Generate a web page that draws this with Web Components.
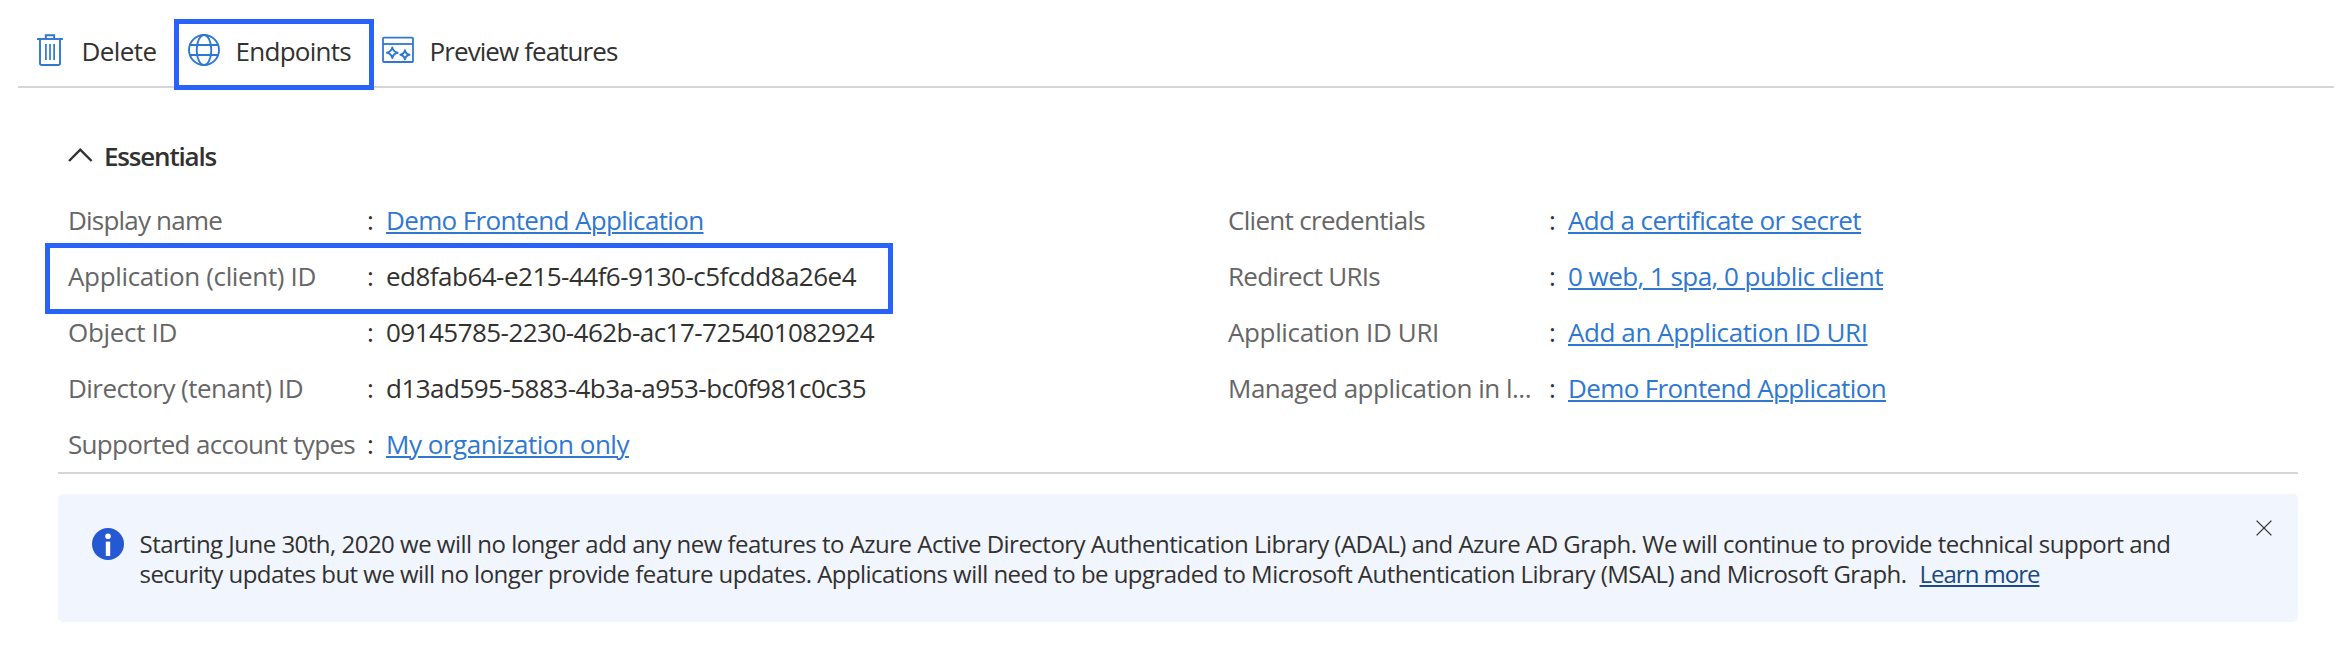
<!DOCTYPE html>
<html lang="en">
<head>
<meta charset="utf-8">
<title>App registration</title>
<style>
  html, body { margin: 0; background: #fff; }
  body { font-family: "Open Sans", "Noto Sans", sans-serif; font-size: 26px; color: #323130; overflow: hidden; height: 656px; }
</style>
</head>
<body>
<app-overview></app-overview>
<script>
const define = (name, html, after) => {
  const t = document.createElement('template');
  t.innerHTML = html;
  customElements.define(name, class extends HTMLElement {
    connectedCallback() {
      if (this.shadowRoot) return;
      this.attachShadow({ mode: 'open' }).append(t.content.cloneNode(true));
      if (after) after(this, this.shadowRoot);
    }
  });
};

/* One line of text, tracked so that its advance equals the "w" attribute. */
define('text-run', `
<style>
  :host { display: inline-block; white-space: nowrap; }
  :host([link]) span { color: #2f78d2; text-decoration: underline; text-decoration-thickness: 2px; text-underline-offset: 2px; }
  :host([link="dark"]) span { color: #1b4a84; }
</style><span><slot></slot></span>`, (el, root) => {
  const w = parseFloat(el.getAttribute('w'));
  const s = root.querySelector('span');
  if (w) s.style.letterSpacing = ((w - s.getBoundingClientRect().width) / [...el.textContent].length).toFixed(4) + 'px';
});

define('focus-frame', `
<style>
  :host { position: absolute; box-sizing: border-box; border: 5px solid #2962f9; pointer-events: none; }
</style>`);

const icons = {
  trash: `<g fill="none" stroke="#2f78d2" stroke-width="1.9">
    <path d="M3 5H29"/><path d="M11.8 5V1.2H20.2V5"/>
    <path d="M6 5V29.3Q6 31 7.7 31H24.3Q26 31 26 29.3V5"/>
    <path d="M11.9 10V26M16 10V26M20.1 10V26" stroke-width="1.7"/></g>`,
  globe: `<g fill="none" stroke="#2f78d2" stroke-width="1.9">
    <circle cx="16" cy="16" r="15"/><ellipse cx="16" cy="16" rx="7.3" ry="15"/>
    <path d="M2 11H30M2 21H30"/></g>`,
  preview: `<g fill="none" stroke="#2f78d2" stroke-width="1.8">
    <rect x="1" y="3.6" width="30" height="24.4" rx="1"/><path d="M1 10H31"/>
    <path stroke-width="1.9" stroke-linejoin="round" d="M10.3 13.4Q11.3 17.8 15.7 18.7Q11.3 19.6 10.3 24Q9.3 19.6 4.9 18.7Q9.3 17.8 10.3 13.4Z"/>
    <path stroke-width="1.9" stroke-linejoin="round" d="M22.9 16.2Q23.7 20 27.5 20.8Q23.7 21.6 22.9 25.4Q22.1 21.6 18.3 20.8Q22.1 20 22.9 16.2Z"/></g>`,
  info: `<circle cx="16" cy="16" r="16" fill="#2459d3"/><circle cx="16" cy="8.2" r="2.8" fill="#fff"/><rect x="13.8" y="13.6" width="4.4" height="14.4" fill="#fff"/>`,
  chevron: `<path d="M1 15 12.3 3.6 23.6 15" fill="none" stroke="#323130" stroke-width="2.4"/>`,
  close: `<path d="M.6.6 15.4 15.4M15.4.6.6 15.4" fill="none" stroke="#323130" stroke-width="1.3"/>`
};
const boxes = { chevron: [25, 18], close: [16, 16] };
define('ui-icon', `<style>:host { display: block; flex: none; } svg { display: block; }</style>`, (el, root) => {
  const [w, h] = boxes[el.getAttribute('name')] || [32, 32];
  root.innerHTML += `<svg width="${w}" height="${h}" viewBox="0 0 ${w} ${h}">${icons[el.getAttribute('name')]}</svg>`;
});

customElements.define('command-item', class extends HTMLElement {
  connectedCallback() {
    this.attachShadow({ mode: 'open' }).innerHTML = `
<style>
  :host { display: flex; gap: 15.5px; position: relative; height: 52px; }
  ui-icon { margin-top: 10px; }
  text-run { line-height: 54px; }
  focus-frame { left: -14px; right: -23px; top: -5px; height: 71px; }
</style>
<ui-icon name="${this.getAttribute('icon')}"></ui-icon><text-run w="${this.getAttribute('w')}">${this.getAttribute('label')}</text-run>
${this.hasAttribute('framed') ? '<focus-frame></focus-frame>' : ''}`;
  }
});

customElements.define('essentials-row', class extends HTMLElement {
  connectedCallback() {
    const a = n => this.getAttribute(n);
    this.attachShadow({ mode: 'open' }).innerHTML = `
<style>
  :host { display: grid; grid-template-columns: 299px 19px 1fr; height: 56px; line-height: 56px; position: relative; }
  .label { color: #666; }
  :host([side="right"]) { grid-template-columns: 321px 19px 1fr; }
  focus-frame { left: -23px; width: 848px; top: -5px; height: 71px; }
</style>
<span class="label"><text-run w="${a('lw')}">${a('label')}</text-run></span><span>:</span>
<text-run w="${a('vw')}" ${this.hasAttribute('link') ? 'link' : ''}>${a('value')}</text-run>
${this.hasAttribute('framed') ? '<focus-frame></focus-frame>' : ''}`;
  }
});

define('essentials-panel', `
<style>
  :host { display: block; margin: 0 36px 0 58px; border-bottom: 2px solid #d6d6d6; height: 386px; box-sizing: border-box; }
  header { display: flex; padding: 40px 0 0 10px; height: 104px; box-sizing: border-box; line-height: 56px; font-weight: 600; }
  header ui-icon { margin: 18px 11px 0 0; }
  .cols { display: grid; grid-template-columns: 1160px 1fr; padding-left: 10px; }
</style>
<header><ui-icon name="chevron"></ui-icon><text-run w="112">Essentials</text-run></header>
<div class="cols">
  <div>
    <essentials-row label="Display name" lw="154" value="Demo Frontend Application" vw="317.5" link></essentials-row>
    <essentials-row label="Application (client) ID" lw="248" value="ed8fab64-e215-44f6-9130-c5fcdd8a26e4" vw="470" framed></essentials-row>
    <essentials-row label="Object ID" lw="109" value="09145785-2230-462b-ac17-725401082924" vw="488"></essentials-row>
    <essentials-row label="Directory (tenant) ID" lw="235" value="d13ad595-5883-4b3a-a953-bc0f981c0c35" vw="480"></essentials-row>
    <essentials-row label="Supported account types" lw="287" value="My organization only" vw="243" link></essentials-row>
  </div>
  <div>
    <essentials-row side="right" label="Client credentials" lw="197" value="Add a certificate or secret" vw="293" link></essentials-row>
    <essentials-row side="right" label="Redirect URIs" lw="152" value="0 web, 1 spa, 0 public client" vw="315" link></essentials-row>
    <essentials-row side="right" label="Application ID URI" lw="211" value="Add an Application ID URI" vw="299.5" link></essentials-row>
    <essentials-row side="right" label="Managed application in l..." lw="303" value="Demo Frontend Application" vw="318" link></essentials-row>
  </div>
</div>`);

define('notice-banner', `
<style>
  :host { display: flex; margin: 20px 36px 0 58px; height: 128px; background: #f0f5fe; border-radius: 5px; font-size: 24px; line-height: 30px; box-sizing: border-box; padding: 34px 26px 0 34px; }
  .text { flex: 1; padding-left: 15.5px; margin-top: 1px; }
  .text div { height: 30px; white-space: nowrap; display: flex; gap: 13px; }
  ui-icon[name=close] { margin-top: -8px; }
</style>
<ui-icon name="info"></ui-icon>
<div class="text">
  <div><text-run w="2031">Starting June 30th, 2020 we will no longer add any new features to Azure Active Directory Authentication Library (ADAL) and Azure AD Graph. We will continue to provide technical support and</text-run></div>
  <div><text-run w="1767">security updates but we will no longer provide feature updates. Applications will need to be upgraded to Microsoft Authentication Library (MSAL) and Microsoft Graph.</text-run><text-run w="120" link="dark">Learn more</text-run></div>
</div>
<ui-icon name="close"></ui-icon>`);

define('command-bar', `
<style>
  :host { display: flex; gap: 31.5px; margin-left: 18px; padding: 24px 0 0 16px; height: 88px; box-sizing: border-box; border-bottom: 2px solid #d6d6d6; }
</style>
<command-item icon="trash" label="Delete" w="75"></command-item>
<command-item icon="globe" label="Endpoints" w="115.5" framed></command-item>
<command-item icon="preview" label="Preview features" w="188" style="margin-left:-.5px"></command-item>`);

define('app-overview', `
<style>:host { display: block; }</style>
<command-bar></command-bar>
<essentials-panel></essentials-panel>
<notice-banner></notice-banner>`);
</script>
</body>
</html>
